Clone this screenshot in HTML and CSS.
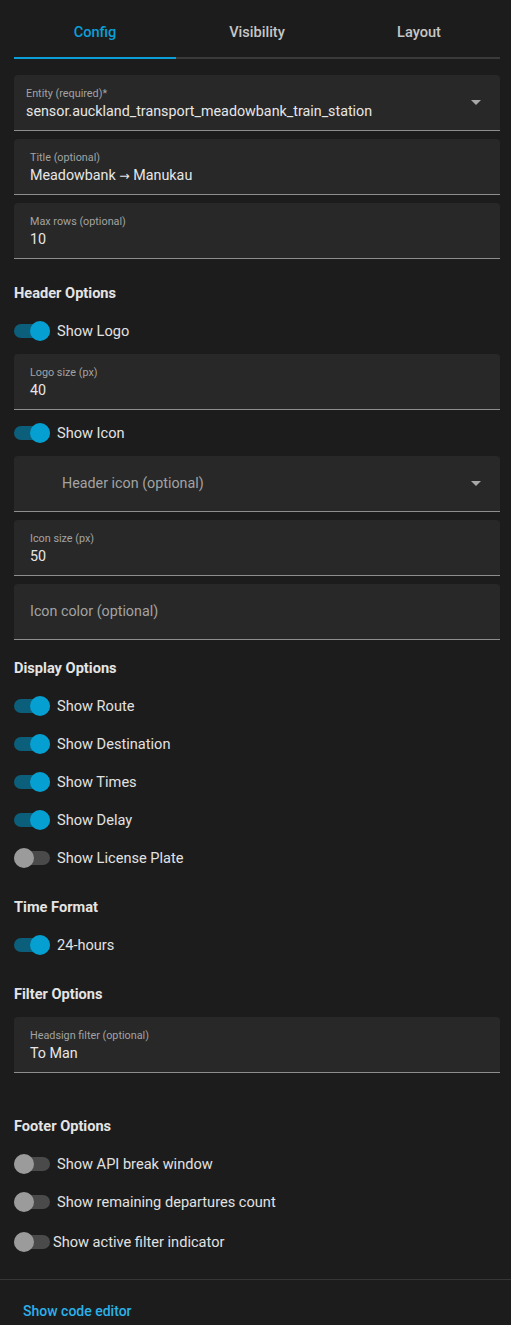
FILE: index.html
```html
<!DOCTYPE html>
<html lang="en">
<head>
<meta charset="utf-8">
<title>Card editor</title>
<link rel="stylesheet" href="styles.css">
</head>
<body>
<div class="editor">
  <div class="tabs">
    <div class="tab active">Config</div>
    <div class="tab">Visibility</div>
    <div class="tab">Layout</div>
  </div>

  <div class="form">
    <div class="field picker">
      <div class="field-text">
        <div class="label">Entity (required)*</div>
        <div class="value">sensor.auckland_transport_meadowbank_train_station</div>
      </div>
      <span class="arrow"></span>
    </div>
    <div class="field gap8">
      <div class="field-text">
        <div class="label">Title (optional)</div>
        <div class="value">Meadowbank <span class="glyph">→</span> Manukau</div>
      </div>
    </div>
    <div class="field gap8">
      <div class="field-text">
        <div class="label">Max rows (optional)</div>
        <div class="value">10</div>
      </div>
    </div>

    <div class="heading h-first">Header Options</div>
    <div class="row after-heading"><span class="switch on"></span><span class="row-label">Show Logo</span></div>
    <div class="field gap4">
      <div class="field-text">
        <div class="label">Logo size (px)</div>
        <div class="value">40</div>
      </div>
    </div>
    <div class="row gap4"><span class="switch on"></span><span class="row-label">Show Icon</span></div>
    <div class="field icon-field gap4">
      <div class="placeholder">Header icon (optional)</div>
      <span class="arrow"></span>
    </div>
    <div class="field gap8">
      <div class="field-text">
        <div class="label">Icon size (px)</div>
        <div class="value">50</div>
      </div>
    </div>
    <div class="field gap8">
      <div class="placeholder">Icon color (optional)</div>
    </div>

    <div class="heading h-display">Display Options</div>
    <div class="row after-heading"><span class="switch on"></span><span class="row-label">Show Route</span></div>
    <div class="row"><span class="switch on"></span><span class="row-label">Show Destination</span></div>
    <div class="row"><span class="switch on"></span><span class="row-label">Show Times</span></div>
    <div class="row"><span class="switch on"></span><span class="row-label">Show Delay</span></div>
    <div class="row"><span class="switch"></span><span class="row-label">Show License Plate</span></div>

    <div class="heading h-20">Time Format</div>
    <div class="row after-heading"><span class="switch on"></span><span class="row-label">24-hours</span></div>

    <div class="heading h-20">Filter Options</div>
    <div class="field after-heading-field">
      <div class="field-text">
        <div class="label">Headsign filter (optional)</div>
        <div class="value">To Man</div>
      </div>
    </div>

    <div class="heading h-footer">Footer Options</div>
    <div class="row after-heading"><span class="switch"></span><span class="row-label">Show API break window</span></div>
    <div class="row"><span class="switch"></span><span class="row-label">Show remaining departures count</span></div>
    <div class="row last-row"><span class="switch"></span><span class="row-label tight">Show active filter indicator</span></div>
  </div>
</div>
<div class="divider"></div>
<div class="code-link">Show code editor</div>
</body>
</html>
```
FILE: styles.css
```css
html, body {
  margin: 0;
  padding: 0;
  background: #1c1c1c;
  font-family: Roboto, "Liberation Sans", sans-serif;
  color: #e1e1e1;
}

.editor {
  margin: 0 11px 0 14px;
}

.tabs {
  display: flex;
  height: 57px;
  border-bottom: 2px solid #3a3a3a;
}

.tab {
  flex: 1;
  display: flex;
  align-items: center;
  justify-content: center;
  padding-top: 7px;
  box-sizing: border-box;
  font-size: 14.6px;
  font-weight: 500;
  color: #c6c6c6;
  margin-bottom: -2px;
  border-bottom: 2px solid transparent;
}

.tab.active {
  color: #0a9fd8;
  border-bottom-color: #0a9fd8;
}

.form {
  display: flex;
  flex-direction: column;
  padding-top: 16px;
}

.field {
  height: 56px;
  box-sizing: border-box;
  background: #282828;
  border-radius: 4px 4px 0 0;
  border-bottom: 1px solid #8e8e8e;
  display: flex;
  align-items: center;
  padding: 0 16px;
}

.field.picker {
  padding: 0 19px 0 12px;
}

.field.icon-field {
  padding: 0 19px 0 48px;
}

.field-text {
  flex: 1;
  align-self: stretch;
  padding-top: 12px;
}

.label {
  font-size: 10.8px;
  line-height: 14px;
  color: #a3a3a3;
}

.value {
  font-size: 14.3px;
  line-height: 20px;
  color: #e6e6e6;
  white-space: nowrap;
}

.glyph {
  font-family: "DejaVu Sans", sans-serif;
  font-size: 12.5px;
}

.placeholder {
  flex: 1;
  font-size: 14.3px;
  line-height: 20px;
  color: #a3a3a3;
  margin-top: -2px;
}

.arrow {
  width: 0;
  height: 0;
  border-left: 5px solid transparent;
  border-right: 5px solid transparent;
  border-top: 5px solid #a8a8a8;
}

.gap8 { margin-top: 8px; }
.gap4 { margin-top: 4px; }

.heading {
  font-size: 14.6px;
  font-weight: 700;
  line-height: 20px;
  color: #e4e4e4;
}

.h-first { margin-top: 24px; }
.h-display { margin-top: 18px; }
.h-20 { margin-top: 20px; }
.h-footer { margin-top: 43px; }

.after-heading { margin-top: 9px; }
.after-heading-field { margin-top: 13px; }

.row {
  display: flex;
  align-items: center;
  height: 38px;
}

.row.last-row {
  padding-top: 2px;
}

.switch {
  position: relative;
  width: 36px;
  height: 20px;
  flex: none;
}

.switch::before {
  content: "";
  position: absolute;
  left: 0;
  right: 0;
  top: 3px;
  height: 14px;
  border-radius: 7px;
  background: #4a4a4a;
}

.switch::after {
  content: "";
  position: absolute;
  top: 0;
  left: 0;
  width: 20px;
  height: 20px;
  border-radius: 50%;
  background: #9b9b9b;
}

.switch.on::before {
  background: #0c5f7b;
}

.switch.on::after {
  left: 16px;
  background: #05a0d1;
}

.row-label {
  margin-left: 7px;
  font-size: 14.6px;
  color: #e2e2e2;
  white-space: nowrap;
}

.row-label.tight {
  margin-left: 3px;
}

.divider {
  margin-top: 18px;
  height: 1px;
  background: #363636;
}

.code-link {
  margin: 21px 0 0 23px;
  font-size: 14px;
  line-height: 20px;
  font-weight: 500;
  color: #2bb1e8;
}
```
